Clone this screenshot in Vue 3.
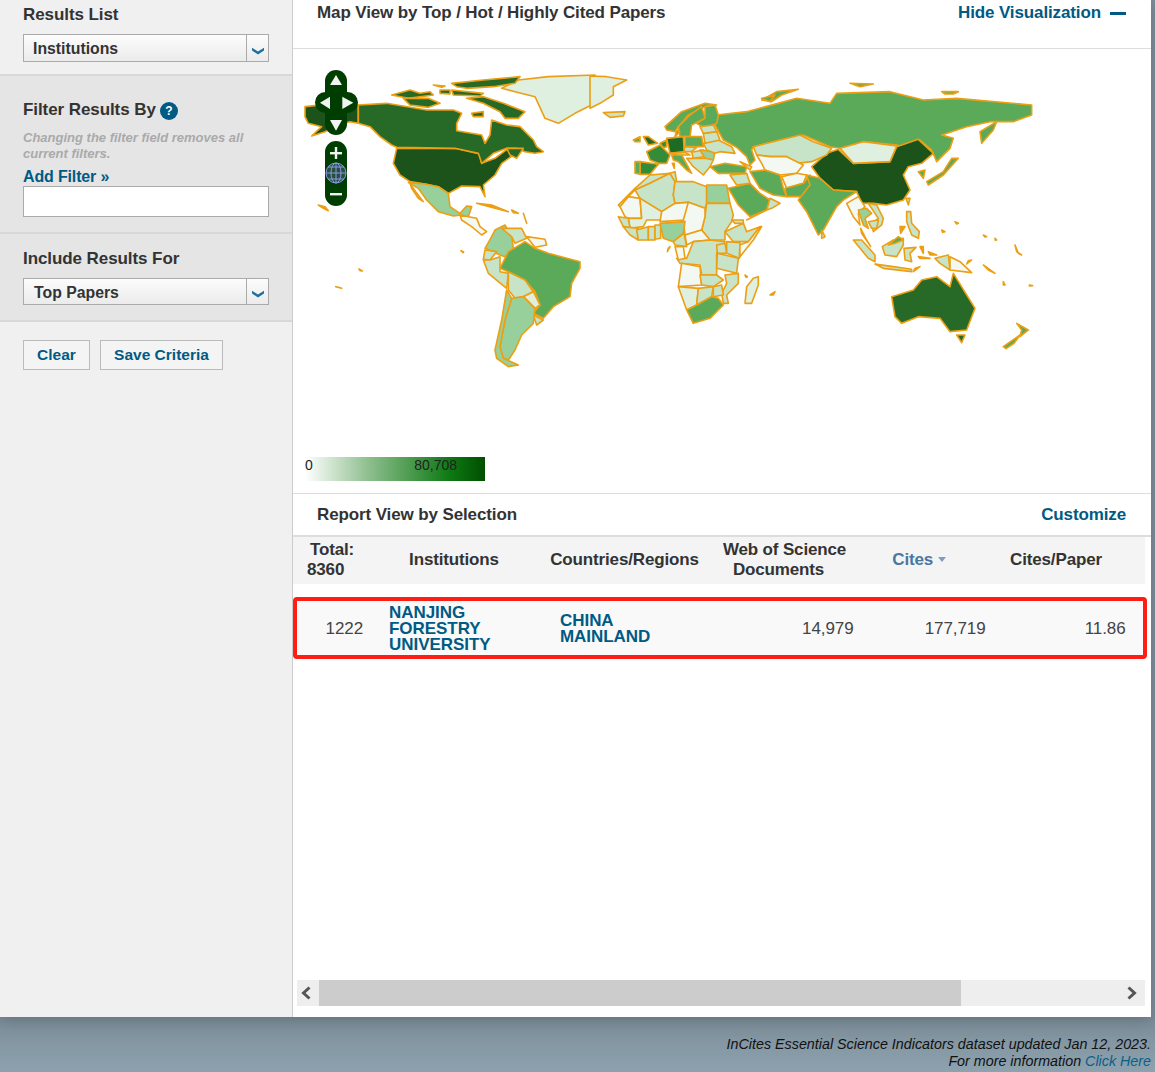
<script setup>
const C1 = '#f3f8f3', C2 = '#dff0e0', C3 = '#c7e3c8', C4 = '#98d09b', C5 = '#5aaa5a', C6 = '#338c38', C7 = '#276a27', C8 = '#1b531b', O = '#ec9f12'

const regions = [
  {
    // Alaska, USA, Latin America, Greenland
    at: 'translate(295 60) scale(0.33333)',
    polys: [
      [C8, '30,140 120,130 190,135 190,190 165,185 130,195 90,215 50,228 80,200 40,190 30,170'],
      [C8, '305,265 480,265 555,282 560,310 600,295 640,265 655,285 620,310 600,345 565,375 570,410 555,380 500,378 460,400 430,380 390,372 345,365 315,345 295,310'],
      [C4, '340,368 390,372 430,380 460,400 465,440 495,460 515,438 530,440 520,470 500,465 475,468 430,455 395,420 370,385'],
      [C4, '345,370 362,395 385,425 370,415 350,385'],
      [C1, '495,465 520,470 545,475 555,500 575,515 560,525 530,500 500,480'],
      [O, '545,430 590,435 640,455 600,445'],
      [O, '650,450 670,460 655,458'],
      [C4, '600,510 630,495 650,530 655,565 630,590 615,585 570,565 590,530'],
      [C3, '620,505 680,505 695,535 660,550 650,530'],
      [C1, '695,530 750,538 755,555 720,562'],
      [C3, '570,570 605,575 585,600 565,598'],
      [C3, '565,600 585,600 615,590 615,635 640,640 635,685 580,640'],
      [C5, '615,625 640,575 690,545 720,565 760,580 855,605 855,625 830,670 825,710 775,740 745,775 715,760 735,735 720,695 690,660 640,635'],
      [C3, '640,635 690,660 715,695 685,710 660,715 640,690'],
      [C2, '685,710 715,695 735,735 720,745'],
      [C3, '715,765 745,780 725,795'],
      [C4, '650,715 685,710 720,745 715,790 680,825 660,870 640,900 625,895 615,860 630,780'],
      [C4, '635,690 650,715 630,780 615,860 625,895 670,915 640,920 605,895 600,870 620,780'],
      [C2, '620,85 670,60 760,50 900,45 900,130 840,160 790,190 750,175 720,110 660,95'],
      [O, '70,435 90,440 100,452 85,445'],
      [O, '498,572 506,576 504,578'],
      [O, '192,627 202,633 195,632'],
      [O, '122,680 140,685 130,682'],
      [O, '685,460 695,490 690,475'],
    ],
  },
  {
    // Canada and the Arctic
    at: 'translate(350 70) scale(0.33333)',
    polys: [
      [C7, '25,105 110,100 230,120 310,120 335,130 320,160 320,182 395,195 405,220 420,195 425,150 470,165 510,170 550,210 560,230 580,245 555,250 525,245 500,235 470,235 430,250 395,280 385,250 315,235 140,232 125,225 90,200 60,170 25,160'],
      [C7, '125,75 180,60 210,70 240,65 250,75 175,85'],
      [C7, '160,85 235,85 270,100 235,112 180,105'],
      [C7, '270,60 300,60 300,72 270,70'],
      [C7, '305,40 400,30 510,20 495,40 430,50 350,55 320,50'],
      [C7, '250,45 285,48 275,52'],
      [C7, '350,85 400,80 460,100 525,125 505,145 465,145 450,125 400,100'],
      [C7, '305,60 400,70 390,78 310,75'],
      [C7, '365,130 400,125 400,140 370,140'],
      [C7, '470,235 520,235 500,265 480,255'],
    ],
  },
  {
    // Asia-Pacific and remaining Eurasia
    at: 'translate(590 60) scale(0.33333)',
    polys: [
      [C2, '0,48 50,50 110,60 70,80 70,105 30,130 0,145'],
      [C3, '40,158 105,155 100,168 60,172'],
      [C5, '380,165 470,155 620,115 720,130 740,100 900,95 1000,120 1100,115 1325,135 1325,165 1270,185 1200,185 1130,200 1055,225 1090,235 1080,265 1040,305 1025,270 990,240 950,265 920,255 820,245 750,265 720,260 640,225 570,240 490,260 485,270 495,300 480,315 470,290 440,262 400,240 375,195'],
      [C5, '515,120 560,95 625,88 575,105 545,125'],
      [C5, '1170,215 1220,185 1210,210 1175,250'],
      [C5, '1055,95 1105,95 1090,102 1065,102'],
      [C5, '780,70 850,72 810,80'],
      [C8, '665,320 710,280 745,268 790,310 900,305 920,260 985,238 1030,280 995,310 955,320 940,345 960,390 940,420 890,435 850,430 815,430 800,395 730,390 690,355'],
      [C2, '750,265 820,245 920,258 900,305 790,310'],
      [C3, '490,260 570,240 630,225 670,245 725,265 710,285 665,305 620,310 590,290 540,290 500,285'],
      [C1, '500,285 540,290 590,290 640,315 620,340 570,345 525,330 515,310'],
      [C5, '480,335 525,330 570,345 580,385 590,410 550,405 510,385'],
      [C1, '575,350 620,340 650,345 640,370 590,385'],
      [C5, '585,385 640,370 660,345 665,370 635,410 590,410'],
      [C5, '650,345 690,355 730,390 800,395 760,420 740,440 700,510 685,525 650,455 625,420 660,375'],
      [C3, '695,510 705,530 695,535'],
      [C5, '415,385 480,370 510,400 540,420 530,450 480,470 445,435'],
      [C3, '470,480 530,450 545,445 570,430 540,415 530,450'],
      [C3, '420,345 470,340 480,370 440,375'],
      [C5, '1010,365 1060,335 1085,295 1105,295 1060,345 1015,375'],
      [C5, '985,335 1005,330 1000,355'],
      [C7, '905,710 970,690 995,660 1040,650 1080,680 1090,640 1155,745 1130,810 1080,815 1050,775 985,770 935,790 915,770'],
      [C7, '1100,825 1125,825 1115,848'],
      [C5, '1280,790 1315,810 1290,830 1295,810'],
      [C5, '1240,860 1290,825 1272,850 1248,866'],
    ],
  },
  {
    // Europe
    at: 'translate(625 95) scale(0.33333)',
    polys: [
      [C5, '120,95 170,50 240,25 275,30 240,35 190,60 160,95 150,110 125,105'],
      [C5, '160,95 195,60 230,35 240,70 200,90 195,125 165,125'],
      [C5, '240,35 270,30 280,60 275,85 240,100 215,85 240,70'],
      [C7, '55,125 70,125 98,145 70,150'],
      [C5, '25,135 45,125 45,140 30,140'],
      [C6, '65,170 105,150 135,180 125,205 100,205 75,195'],
      [C6, '105,145 125,135 125,155 115,158'],
      ['#1e6b25', '125,130 175,125 178,170 135,175'],
      [C6, '45,200 100,208 75,238 45,238'],
      [C5, '30,200 45,200 45,238 30,235'],
      [C5, '140,180 170,180 200,235 185,225 160,200 145,195'],
      [C5, '142,205 148,205 148,220'],
      [C3, '135,175 180,172 195,180 160,180'],
      [C5, '180,125 230,125 235,155 180,155'],
      [C3, '178,155 215,157 200,170 178,170'],
      [C3, '200,172 235,165 240,185 205,190'],
      [C4, '225,165 270,170 265,195 240,190'],
      [C3, '235,145 280,135 320,155 330,175 285,170 270,175 245,165'],
      [C3, '235,115 275,110 285,135 240,145'],
      [C3, '225,95 265,90 275,110 235,115'],
      [C3, '185,190 240,190 265,195 255,215 235,240 205,215'],
      [C5, '255,215 300,205 365,215 360,235 280,235'],
      [C5, '155,105 165,110 150,125'],
      [C3, '345,200 380,215 375,225'],
      [C5, '410,10 450,0 435,20'],
    ],
  },
  {
    // Africa
    at: 'translate(610 170) scale(0.33333)',
    polys: [
      [C3, '25,105 75,55 120,15 180,10 120,40 75,60 55,80 30,110'],
      [C3, '75,60 120,40 180,10 195,35 190,75 195,100 155,125 90,85'],
      [C3, '180,10 195,5 200,35 195,35'],
      [C3, '195,35 250,35 290,50 290,100 285,115 235,97 195,100 190,75'],
      [C4, '290,45 350,45 360,100 290,100'],
      [C3, '290,100 360,100 370,135 365,155 345,185 345,210 300,210 275,180 285,140'],
      [C3, '345,185 400,160 410,185 450,170 415,215 370,215'],
      [C1, '450,170 455,170 430,210 390,260 388,225 415,215'],
      [C3, '365,150 400,150 400,160 375,160'],
      [C1, '30,110 55,80 90,85 95,145 55,145 45,140'],
      [C2, '90,85 155,125 155,150 110,150 100,170 60,175 55,145 95,145'],
      [C1, '155,125 195,100 235,97 225,150 150,155'],
      [C1, '235,97 285,115 285,140 275,180 225,195 220,150'],
      [C3, '25,140 55,145 60,175 40,170'],
      [C3, '40,170 85,175 85,210 60,195'],
      [C3, '80,180 115,170 115,210 85,210'],
      [C3, '115,170 135,170 135,210 115,210'],
      [C3, '135,165 152,165 152,205 135,208'],
      [C4, '150,160 225,155 220,190 190,215 160,205'],
      [C3, '190,215 222,190 230,230 195,225'],
      [C1, '225,195 275,180 300,210 250,215 230,225'],
      [C3, '250,215 300,210 345,215 320,250 320,315 275,315 270,285 210,280 200,265 230,265'],
      [C1, '195,230 220,230 225,265 205,270'],
      [C3, '320,225 345,220 350,250 322,250'],
      [C3, '350,215 390,218 388,265 350,250'],
      [C3, '322,250 385,265 380,310 320,295'],
      [C1, '215,280 270,290 275,345 205,350'],
      [C3, '270,315 320,315 340,330 310,350 275,345'],
      [C3, '345,315 385,310 385,340 350,375 355,400 340,400 335,370 350,340'],
      [C3, '310,350 335,345 340,375 310,380'],
      [C2, '205,350 265,355 260,405 230,420'],
      [C3, '265,355 310,350 305,380 260,405'],
      [C5, '230,420 260,405 305,380 325,385 340,405 300,445 250,460'],
      [C2, '430,325 445,320 445,345 425,400 405,400 410,350'],
      [O, '175,235 180,230 172,245'],
      [O, '405,315 412,320 408,322'],
      [O, '480,375 495,365 490,375'],
    ],
  },
  {
    // South-East Asia and the Pacific islands
    at: 'translate(840 190) scale(0.33333)',
    polys: [
      [C1, '20,40 55,20 75,50 55,70 60,105 40,80'],
      [C4, '55,60 80,55 95,70 75,85 85,115 70,105'],
      [C3, '85,40 110,45 130,85 125,105 100,125 95,100 115,85'],
      [C3, '85,95 115,90 110,115 95,115'],
      [C5, '62,115 80,150 92,170 65,130'],
      [C3, '40,150 65,150 105,195 105,215 85,205'],
      [C3, '105,222 160,230 215,238 215,245 130,235'],
      [C3, '127,170 160,150 190,145 190,165 170,200 135,195'],
      [C5, '145,165 175,140 190,150 165,160'],
      [C3, '192,175 228,172 210,190 215,215 195,210'],
      [C3, '200,65 212,65 215,100 238,125 235,145 215,135 200,95'],
      [C3, '285,205 325,195 330,240 300,220'],
      [C1, '330,200 360,215 395,248 330,240'],
      [C3, '198,25 210,25 205,45'],
      [O, '240,170 250,170 250,190'],
      [O, '235,200 270,205 240,205'],
      [O, '265,185 290,195 270,195'],
      [O, '345,95 355,100 350,102'],
      [O, '305,120 315,125 308,127'],
      [O, '430,135 440,140 435,141'],
      [O, '465,145 470,150 466,151'],
      [O, '525,165 535,190 545,195 530,185'],
      [O, '430,225 465,250 445,240'],
      [O, '490,275 495,285 490,285'],
      [O, '395,210 380,222 385,212'],
      [O, '180,110 195,110 182,130'],
      [O, '225,235 240,230 220,245'],
      [O, '568,285 578,287 568,288'],
    ],
  },
]
</script>

<template>
  <div class="page">
    <div class="shell">
      <aside class="side">
        <section class="block first">
          <h3 class="title">Results List</h3>
          <div class="select">
            <span class="select-text">Institutions</span>
            <span class="select-arrow">
              <svg width="14" height="8" viewBox="0 0 14 8"><path d="M1 .8 L7 4.6 L13 .8 L13 3.4 L7 7.6 L1 3.4 Z" fill="#1f6f9f" /></svg>
            </span>
          </div>
        </section>
        <section class="block filter">
          <h3 class="title">Filter Results By <span class="help">?</span></h3>
          <p class="note">Changing the filter field removes all current filters.</p>
          <a class="add">Add Filter »</a>
          <div class="input"></div>
        </section>
        <section class="block include">
          <h3 class="title">Include Results For</h3>
          <div class="select short">
            <span class="select-text">Top Papers</span>
            <span class="select-arrow">
              <svg width="14" height="8" viewBox="0 0 14 8"><path d="M1 .8 L7 4.6 L13 .8 L13 3.4 L7 7.6 L1 3.4 Z" fill="#1f6f9f" /></svg>
            </span>
          </div>
        </section>
        <div class="buttons">
          <button class="btn clear">Clear</button>
          <button class="btn save">Save Criteria</button>
        </div>
      </aside>

      <main class="main">
        <header class="map-head">
          <span class="head-title">Map View by Top / Hot / Highly Cited Papers</span>
          <a class="head-link">Hide Visualization <span class="minus"></span></a>
        </header>
        <div class="map-wrap">
          <svg class="map" width="858" height="400" viewBox="293 49 858 400">
            <g v-for="(r, n) in regions" :key="n" :transform="r.at" stroke="#ec9f12" stroke-width="4.8" stroke-linejoin="round">
              <polygon v-for="(p, i) in r.polys" :key="i" :points="p[1]" :fill="p[0]" />
            </g>
            <g fill="#003d00">
              <rect x="325" y="70" width="22" height="65" rx="11" />
              <rect x="315" y="92" width="43" height="21" rx="10.5" />
              <rect x="325" y="141" width="22" height="65" rx="11" />
            </g>
            <g fill="#f0f4f0">
              <polygon points="330,85 336,75 342,85" />
              <polygon points="320,102.7 330,96.7 330,109" />
              <polygon points="342.3,96.7 353.3,102.7 342.3,109" />
              <polygon points="330,120 342,120 336,130.7" />
              <rect x="330" y="152" width="12" height="2.4" />
              <rect x="334.8" y="147" width="2.4" height="12" />
              <rect x="330" y="193" width="12" height="2.4" />
            </g>
            <g fill="none" stroke="#8d97e0" stroke-width="1">
              <circle cx="336" cy="173" r="10" fill="#24503f" />
              <ellipse cx="336" cy="173" rx="5" ry="10" />
              <path d="M326 173 H346 M328 167 H344 M328 179 H344 M336 163 V183" />
            </g>
          </svg>
        </div>
        <div class="legend"><span>0</span><span>80,708</span></div>
        <header class="report-head">
          <span class="head-title">Report View by Selection</span>
          <a class="head-link">Customize</a>
        </header>
        <div class="grid thead">
          <div class="th total"><span class="nudge">Total:</span><br />8360</div>
          <div class="th inst">Institutions</div>
          <div class="th country">Countries/Regions</div>
          <div class="th wos">Web of Science<br /><span class="docs">Documents</span></div>
          <div class="th cites">Cites <i class="caret"></i></div>
          <div class="th cp">Cites/Paper</div>
        </div>
        <div class="grid row">
          <div class="td num rank">1222</div>
          <a class="td link inst-cell">NANJING<br />FORESTRY<br />UNIVERSITY</a>
          <a class="td link country-cell">CHINA<br />MAINLAND</a>
          <div class="td num">14,979</div>
          <div class="td num">177,719</div>
          <div class="td num">11.86</div>
        </div>
        <div class="spacer"></div>
        <div class="scrollbar">
          <span class="arrow">
            <svg width="12" height="14" viewBox="0 0 12 14"><path d="M9.5 1.5 L3.5 7 L9.5 12.5" fill="none" stroke="#555" stroke-width="3" /></svg>
          </span>
          <span class="thumb"></span>
          <span class="arrow end">
            <svg width="12" height="14" viewBox="0 0 12 14"><path d="M2.5 1.5 L8.5 7 L2.5 12.5" fill="none" stroke="#555" stroke-width="3" /></svg>
          </span>
        </div>
      </main>
    </div>
    <footer class="foot">
      InCites Essential Science Indicators dataset updated Jan 12, 2023.<br />
      For more information <a>Click Here</a>
    </footer>
  </div>
</template>

<style scoped>
.page {
  width: 1155px;
  height: 1072px;
  overflow: hidden;
  background: linear-gradient(#7c8d98 1017px, #8da2af 1072px);
  font-family: "Liberation Sans", Arial, sans-serif;
  color: #333;
}
.shell {
  display: flex;
  width: 1151px;
  height: 1017px;
  background: #fff;
  box-shadow: 0 4px 14px rgba(60, 70, 80, 0.35);
}
.side {
  width: 292px;
  flex: none;
  background: #f0f0f0;
  border-right: 1px solid #ccc;
}
.block {
  padding: 0 23px;
  border-bottom: 2px solid #d8d8d8;
  box-sizing: border-box;
}
.first { height: 76px; padding-top: 5px; }
.filter { height: 158px; padding-top: 23px; background: #e5e5e5; }
.include { height: 88px; padding-top: 15px; background: #e5e5e5; }
.title {
  margin: 0;
  font-size: 17px;
  line-height: 20px;
  font-weight: bold;
  letter-spacing: -0.08px;
  color: #333;
  display: flex;
  align-items: center;
  gap: 4px;
}
.select {
  display: flex;
  width: 246px;
  height: 28px;
  box-sizing: border-box;
  margin-top: 9px;
  border: 1px solid #aaa;
  background: linear-gradient(#fcfcfc, #ebebeb);
}
.short { height: 27px; }
.select-text {
  flex: 1;
  padding-left: 9px;
  font-size: 15.8px;
  font-weight: bold;
  line-height: 27px;
  color: #333;
}
.short .select-text { padding-left: 10px; }
.select-arrow {
  width: 22px;
  border-left: 1px solid #aaa;
  display: flex;
  align-items: center;
  justify-content: center;
  padding-top: 5px;
  box-sizing: border-box;
}
.help {
  display: inline-block;
  width: 18px;
  height: 18px;
  margin-top: 3px;
  border-radius: 50%;
  background: #005a84;
  color: #fff;
  font-size: 12px;
  line-height: 18px;
  text-align: center;
}
.note {
  margin: 10px 0 0;
  width: 240px;
  font-size: 13px;
  line-height: 16px;
  font-style: italic;
  font-weight: bold;
  color: #aaa;
}
.add {
  display: block;
  margin-top: 6px;
  font-size: 16px;
  line-height: 18px;
  font-weight: bold;
  letter-spacing: -0.15px;
  color: #005a84;
}
.input {
  width: 246px;
  height: 31px;
  box-sizing: border-box;
  border: 1px solid #aaa;
  background: #fff;
}
.buttons {
  display: flex;
  gap: 10px;
  padding: 18px 23px 0;
}
.btn {
  height: 30px;
  padding: 0;
  box-sizing: border-box;
  border: 1px solid #bbb;
  background: #f4f4f4;
  font-family: inherit;
  font-size: 15.5px;
  font-weight: bold;
  color: #005a84;
}
.clear { width: 67px; }
.save { width: 123px; }
.main {
  flex: 1;
  min-width: 0;
  display: flex;
  flex-direction: column;
}
.map-head {
  height: 49px;
  flex: none;
  box-sizing: border-box;
  border-bottom: 1px solid #ddd;
  padding: 3px 25px 0 24px;
  display: flex;
  justify-content: space-between;
}
.head-title {
  font-size: 17px;
  line-height: 20px;
  font-weight: bold;
  letter-spacing: -0.12px;
  color: #333;
}
.head-link {
  font-size: 17px;
  line-height: 20px;
  font-weight: bold;
  letter-spacing: -0.12px;
  color: #005a84;
  display: flex;
  align-items: center;
  height: 20px;
}
.minus {
  display: inline-block;
  width: 16px;
  height: 3px;
  margin-left: 9px;
  background: #005a84;
}
.map-wrap { height: 400px; flex: none; }
.map { display: block; }
.legend {
  flex: none;
  width: 180px;
  height: 24px;
  box-sizing: border-box;
  margin: 8px 0 12px 12px;
  padding-right: 28px;
  display: flex;
  justify-content: space-between;
  font-size: 14px;
  line-height: 16px;
  color: #222;
  background: linear-gradient(90deg, #fff, #8fbf8f 35%, #0e7a14 80%, #004f00);
}
.report-head {
  flex: none;
  height: 44px;
  box-sizing: border-box;
  border-top: 1px solid #ddd;
  border-bottom: 2px solid #ddd;
  padding: 11px 25px 0 24px;
  display: flex;
  justify-content: space-between;
}
.grid {
  display: grid;
  grid-template-columns: 86px 165px 165px 151px 132px 140px;
  flex: none;
}
.thead {
  width: 852px;
  height: 47px;
  box-sizing: border-box;
  padding-bottom: 2px;
  background: #f4f4f4;
  align-items: center;
}
.th {
  font-size: 17px;
  line-height: 20px;
  font-weight: bold;
  letter-spacing: -0.15px;
  color: #333;
  text-align: center;
}
.total { padding-left: 14px; text-align: left; }
.nudge { margin-left: 3px; }
.inst { padding-right: 15px; }
.country { padding-right: 4px; }
.docs { margin-right: 12px; }
.cites { padding-right: 14px; color: #4a77a0; }
.cp { padding-right: 12px; }
.caret {
  display: inline-block;
  vertical-align: 3px;
  border-left: 4.5px solid transparent;
  border-right: 4.5px solid transparent;
  border-top: 5px solid #7d9fc0;
}
.row {
  width: 854px;
  height: 62px;
  box-sizing: border-box;
  margin-top: 13px;
  padding-top: 2px;
  border: 4px solid #ff1e14;
  border-radius: 4px;
  background: #f9f9f9;
  align-items: center;
  grid-template-columns: 82px 165px 165px 151px 132px 140px;
}
.td { font-size: 17px; }
.num { text-align: right; padding-right: 6.5px; font-size: 17px; letter-spacing: -0.1px; color: #444; }
.rank { padding-right: 16px; }
.link {
  font-weight: bold;
  line-height: 16px;
  letter-spacing: -0.05px;
  color: #005a84;
}
.inst-cell { padding-left: 10px; }
.country-cell { padding-left: 16px; }
.spacer { flex: 1; }
.scrollbar {
  flex: none;
  width: 848px;
  height: 26px;
  margin: 0 0 11px 4px;
  background: #eee;
  display: flex;
  align-items: center;
}
.arrow {
  width: 22px;
  display: flex;
  justify-content: center;
  flex: none;
  padding-right: 4px;
  box-sizing: border-box;
}
.arrow.end { margin-left: auto; }
.thumb {
  width: 642px;
  height: 26px;
  background: #ccc;
}
.foot {
  padding: 19px 4px 0 0;
  text-align: right;
  font-size: 14.3px;
  line-height: 17px;
  font-style: italic;
  color: #111;
}
.foot a { color: #0c5f86; }
</style>

<style>
html, body { margin: 0; padding: 0; }
</style>
